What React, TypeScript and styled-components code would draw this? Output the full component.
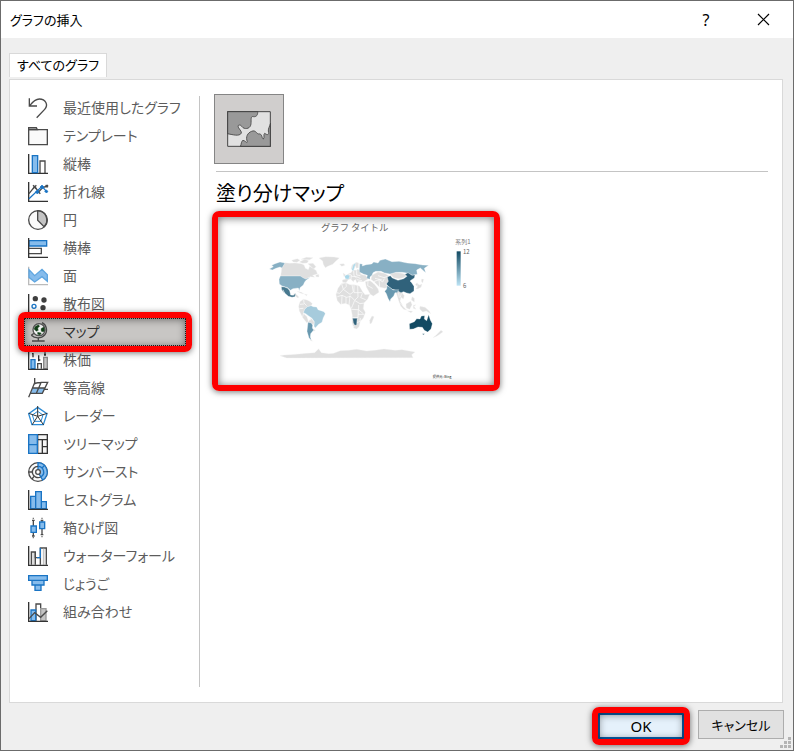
import React, { useState } from 'react';
import styled, { createGlobalStyle, css } from 'styled-components';

const INK = '#4a4a4a';
const BLUE = '#1a74c4';
const SKY = '#86bcec';

const GlobalStyle = createGlobalStyle`
  *, *::before, *::after { box-sizing: border-box; }
  body {
    margin: 0;
    background: #efefef;
    color: #000;
    font-family: "Noto Sans CJK JP", "Noto Sans", sans-serif;
    font-feature-settings: "palt";
    font-size: 14px;
  }
  button { font: inherit; font-feature-settings: inherit; color: inherit; }
`;

const Dialog = styled.div`
  display: flex;
  flex-direction: column;
  min-height: 100vh;
  border: 1px solid #6b6b6b;
  background: #efefef;
`;

const TitleBar = styled.header`
  display: flex;
  align-items: center;
  height: 37px;
  padding: 0 6px 0 9px;
  background: #fff;
`;

const Title = styled.h1`
  flex: 1;
  margin: 0;
  font-size: 13px;
  font-weight: 400;
`;

const CaptionButton = styled.button`
  display: grid;
  place-items: center;
  width: 48px;
  height: 28px;
  margin-left: 9px;
  padding: 0;
  border: 0;
  background: transparent;
  font-family: "Noto Sans", sans-serif;
  font-size: 16px;
`;

const Body = styled.div`
  display: flex;
  flex: 1;
  flex-direction: column;
  align-items: stretch;
  padding: 15px 10px 0 8px;
`;

const Tab = styled.button`
  align-self: flex-start;
  height: 24px;
  margin-bottom: 2px;
  padding: 0 7px 2px;
  border: 1px solid #d9d9d9;
  border-bottom: 0;
  background: #fff;
  font-size: 13px;
  line-height: 20px;
`;

const Panel = styled.section`
  display: flex;
  flex: 1;
  padding: 14px 14px 15px;
  border: 1px solid #d9d9d9;
  background: #fff;
`;

const ChartList = styled.ul`
  width: 162px;
  margin: 0;
  padding: 0;
  list-style: none;
`;

const frame = css<{ $edge?: number }>`
  position: relative;
  &::after {
    content: "";
    position: absolute;
    z-index: 1;
    inset: -6px;
    border: 6px solid #fe0000;
    border-radius: 7px;
    box-shadow: 0 1px 6px rgba(0, 0, 0, 0.55), inset 0 1px 8px rgba(0, 0, 0, 0.55);
    pointer-events: none;
  }
`;

const ChartItem = styled.button<{ $selected: boolean }>`
  display: flex;
  align-items: center;
  gap: 15px;
  width: 100%;
  height: 28px;
  padding: 0 3px;
  border: 1px solid transparent;
  background: transparent;
  color: #5c5c5c;
  line-height: 20px;
  text-align: left;
  white-space: nowrap;
  ${({ $selected }) =>
    $selected &&
    css`
      ${frame}
      border: 1px dotted #222;
      background: #c8c6c4;
      color: #333;
      &::after { inset: -7px; }
    `}
`;

const ItemLabel = styled.span`
  padding-bottom: 2px;
`;

const Icon = styled.svg`
  flex: none;
  width: 20px;
  height: 20px;
  overflow: visible;
  fill: none;
  stroke: ${INK};
  stroke-width: 4;
`;

const Divider = styled.div`
  width: 1px;
  margin: 2px 14px 0 13px;
  background: #c4c4c4;
`;

const Main = styled.div`
  flex: 1;
  min-width: 0;
`;

const TypeTile = styled.button`
  display: grid;
  place-items: center;
  width: 70px;
  height: 70px;
  padding: 0;
  border: 1px solid #858585;
  background: #d0cecd;
`;

const TypeHeading = styled.h2`
  height: 45px;
  margin: 7px 0 0 2px;
  border-top: 1px solid #c4c4c4;
  font-size: 20px;
  font-weight: 400;
  line-height: 42px;
`;

const Preview = styled.figure`
  ${frame}
  width: 276px;
  margin: 1px 0 0 4px;
  background: #fff;
`;

const PreviewChart = styled.svg`
  display: block;
  width: 100%;
  height: auto;
  font-family: "Noto Sans CJK JP", sans-serif;
  font-feature-settings: normal;
`;

const Footer = styled.footer`
  display: flex;
  justify-content: flex-end;
  align-items: flex-start;
  gap: 14px;
  position: relative;
  height: 47px;
  padding: 7px 9px 0;
`;

const DialogButton = styled.button<{ $primary?: boolean }>`
  width: 86px;
  height: 29px;
  padding: 0;
  border: 1px solid #adadad;
  background: #e1e1e1;
  font-size: 13px;
  line-height: 26px;
  ${({ $primary }) =>
    $primary &&
    css`
      ${frame}
      height: 26px;
      margin-top: 3px;
      border: 2px solid #0a62b0;
      background: #e5f1fb;
      font-family: "Noto Sans", sans-serif;
      font-size: 15px;
      line-height: 20px;
      &::after { inset: -8px; }
    `}
`;

const Grip = styled.svg`
  position: absolute;
  right: 2px;
  bottom: 2px;
  width: 11px;
  height: 11px;
  fill: #b4b4b4;
`;

const axis = <path d="M2 0V58H60" stroke="#333" />;

const charts: { name: string; icon: React.ReactNode }[] = [
  { name: '最近使用したグラフ', icon: <path d="M4 1V24H27M5 23C16 9 23 3 34 3C53 3 62 21 50 34L26 59" /> },
  {
    name: 'テンプレート',
    icon: (
      <>
        <path d="M2 11H58V56H2Z" fill="#fafafa" />
        <path d="M2 5H25L28 11H2Z" fill="#aaa" />
      </>
    ),
  },
  {
    name: '縦棒',
    icon: (
      <>
        <path d="M36 58V21H51V58" />
        {axis}
        <path d="M13 56V5H29V56Z" fill={SKY} stroke={BLUE} />
      </>
    ),
  },
  {
    name: '折れ線',
    icon: (
      <>
        {axis}
        <path d="M3 35L20 14L32 30L44 17L58 12" />
        <path d="M15 10l10 10M25 10l-10 10M28 26l9 9M53 9l7 7M60 9l-7 7" />
        <path d="M3 50L42 13L58 31" stroke={BLUE} />
        <path d="M22 30l6-6 6 6-6 6zM36 15l6-6 6 6-6 6zM50 28l5-4 5 4-5 5z" fill={BLUE} stroke={BLUE} strokeWidth="2" />
      </>
    ),
  },
  {
    name: '円',
    icon: (
      <>
        <circle cx="30" cy="30" r="28" fill="#fafafa" stroke="none" />
        <path d="M29 2V31L48 50A28 28 0 0 0 29 2Z" fill="#c4c4c4" />
        <circle cx="30" cy="30" r="28" />
      </>
    ),
  },
  {
    name: '横棒',
    icon: (
      <>
        <path d="M3 31H40V47H3" />
        <path d="M3 8H56V24H3Z" fill={SKY} stroke={BLUE} />
        {axis}
      </>
    ),
  },
  {
    name: '面',
    icon: (
      <>
        <path d="M2 2V56H60" stroke="#bbb" />
        <path d="M3 11L20 29L42 10L58 26V46L42 32L20 48L3 34Z" fill={SKY} stroke="#5fa6e0" />
      </>
    ),
  },
  {
    name: '散布図',
    icon: (
      <>
        {axis}
        <g fill="#3f3f3f" stroke="none">
          <circle cx="22" cy="14" r="8" />
          <circle cx="48" cy="18" r="8" />
          <circle cx="45" cy="41" r="8" />
        </g>
        <circle cx="18" cy="37" r="6" stroke={BLUE} />
      </>
    ),
  },
  {
    name: 'マップ',
    icon: (
      <>
        <path d="M42 2C56 8 60 28 50 39C40 50 20 50 10 40" />
        <circle cx="33" cy="23" r="18" fill="#f2f2f2" stroke="#555" />
        <path d="M21 14L31 8L35 13L29 18L31 25L25 28L18 21ZM39 20L47 15L50 25L46 30L40 28ZM29 31L40 33L36 39L29 37Z" fill="#123f18" stroke="#123f18" strokeWidth="1" />
        <path d="M10 40L18 34M31 48V56M12 57H50" />
      </>
    ),
  },
  {
    name: '株価',
    icon: (
      <>
        <path d="M29 56V41H40V56" />
        <path d="M47 56V22H58V56Z" fill="#c4c4c4" stroke="#888" />
        <path d="M9 56V29H21V56Z" fill={SKY} stroke={BLUE} />
        {axis}
        <path d="M15 9V22M12 11h5M32 16V34M32 30h5M51 7V18M48 14h6" stroke="#333" />
      </>
    ),
  },
  {
    name: '等高線',
    icon: (
      <>
        <path d="M14 30H50L43 46H8Z" fill={SKY} stroke="none" />
        <path d="M20 0V14L2 58M17 20C24 10 32 17 40 13H59L43 46H7M14 30H50M39 14L25 46M48 34H60" />
      </>
    ),
  },
  {
    name: 'レーダー',
    icon: (
      <>
        <path d="M29 4L57 23L46 56H12L2 23Z" stroke="#2b8bd6" />
        <path d="M29 16L45 27L39 46H19L13 27Z" stroke="#2b8bd6" strokeWidth="3" />
        <path d="M29 0V31M2 22L29 31L58 22M12 57L29 31L47 57" stroke="#333" strokeWidth="3" />
      </>
    ),
  },
  {
    name: 'ツリーマップ',
    icon: (
      <>
        <path d="M29 2H58V58H29ZM29 17H58M43 17V58M43 38H58" fill="#f5f5f5" stroke="#333" />
        <path d="M2 2H28V58H2ZM2 32H28" fill={SKY} stroke={BLUE} />
      </>
    ),
  },
  {
    name: 'サンバースト',
    icon: (
      <>
        <circle cx="30" cy="30" r="28" fill="#fafafa" />
        <path d="M30 2A28 28 0 0 1 44 54L30 30Z" fill={SKY} stroke={BLUE} />
        <path d="M30 13A17 17 0 1 0 38 45" />
        <path d="M30 13A17 17 0 0 1 38 45M50 10L42 18" stroke={BLUE} />
        <circle cx="30" cy="30" r="7" fill="#fff" />
        <path d="M2 30H13M12 51L18 43" />
      </>
    ),
  },
  {
    name: 'ヒストグラム',
    icon: (
      <>
        <path d="M8 56V19H23V56ZM23 56V5H40V56ZM40 56V35H55V56Z" fill={SKY} stroke={BLUE} />
        {axis}
      </>
    ),
  },
  {
    name: '箱ひげ図',
    icon: (
      <>
        <path d="M16 6V54M42 6V50M12 7h8M38 7h8M12 54h8M38 50h8" />
        <path d="M9 24H25V43H9ZM35 12H50V32H35Z" fill={SKY} stroke={BLUE} />
        <path d="M14 1h4M40 1h4M14 59h4M40 56h4" stroke="#777" />
      </>
    ),
  },
  {
    name: 'ウォーターフォール',
    icon: (
      <>
        <path d="M37 56V6H55V56" fill="#f5f5f5" />
        <path d="M47 8V56" stroke="#c4c4c4" />
        <path d="M10 56V18H22V56" fill="#ddd" />
        <path d="M22 18V35H37" />
        <path d="M27 35H37V6" stroke={BLUE} />
        {axis}
      </>
    ),
  },
  {
    name: 'じょうご',
    icon: <path d="M2 5H58V19H2ZM12 19H48V33H12ZM21 33H39V49H21Z" fill={SKY} stroke={BLUE} />,
  },
  {
    name: '組み合わせ',
    icon: (
      <>
        <path d="M24 56V6H38V56" />
        <path d="M38 56V20H54V56Z" fill="#c4c4c4" stroke="#999" />
        <path d="M9 56V24H23V56Z" fill={SKY} stroke={BLUE} />
        {axis}
        <path d="M3 50L20 32L38 46L58 26" />
      </>
    ),
  },
];

function RegionMapIcon() {
  return (
    <svg width="44" height="36" viewBox="0 0 132 108" aria-hidden="true">
      <path d="M1 1H131V107H1Z" fill="#e1e1e1" />
      <path
        d="M1 1H92C93 12 88 18 80 17C70 14 73 27 72 38C71 52 57 56 48 50C42 44 41 40 34 43C30 50 44 58 43 66C38 78 14 70 1 68Z"
        fill="#999"
        stroke="#555"
        strokeWidth="3"
      />
      <path
        d="M40 107C44 98 42 91 48 88C57 90 60 99 61 92C55 78 62 65 74 61C86 56 87 67 95 69C106 66 104 84 109 84C114 79 108 71 113 67C123 74 127 71 124 60C124 51 127 49 131 36V107Z"
        fill="#999"
        stroke="#555"
        strokeWidth="3"
      />
      <path d="M2 2H130V106H2Z" fill="none" stroke="#444" strokeWidth="3" />
    </svg>
  );
}

function WorldMap() {
  return (
    <g transform="translate(165 120)" strokeLinejoin="round">
      <g fill="#dfdfdf" stroke="#f4f4f4" strokeWidth="1">
        <path d="M75 53L88 55L105 54L124 56L132 60L136 70L145 74L149 64L158 69L169 77L172 87L158 91L164 97L151 95L137 103L128 101L121 93H62L64 80L65 69Z" />
        <path d="M95 46L112 41L120 46L111 52L100 51ZM118 51L134 43L146 47L141 54L128 55ZM123 43L139 37L159 38L149 44ZM144 56L159 55L168 65L161 72L150 62ZM167 91L176 88L177 96L168 95Z" />
        <path d="M177 39L197 35L222 36L238 39L227 49L218 58L203 64L196 68L190 58L188 48Z" />
        <path d="M239 57L252 56L254 61L245 64Z" />
        <path d="M101 144L111 150L117 157L112 158L103 150ZM111 139L124 142L132 147L123 145ZM133 147L142 149L139 152Z" />
        <path d="M120 170L130 163L141 165L151 170L157 176L153 183L142 186L134 193L132 207L141 215L145 229L141 234L129 219L118 198L116 184Z" />
        <path d="M145 230L153 220L163 232L160 240L153 233L144 232ZM158 251L166 256L161 259ZM151 282L158 289L152 287Z" />
        <path d="M244 116L258 114L270 119L282 119L298 123L307 139L315 149L329 148L323 162L312 174L310 191L316 202L310 219L301 229L297 245L290 252L281 249L276 231L277 211L273 192L269 181L257 175L242 178L232 167L228 149L234 130Z" />
        <path d="M336 213L342 215L335 234L330 237L329 226Z" />
        <path d="M247 105L258 102L256 95L263 87L273 83L279 75L289 76L293 73L302 77L302 88L315 90L326 101L317 106L310 110L296 109L291 114L286 103L280 110L272 102L264 105L258 113L248 112Z" />
        <path d="M249 84L257 90L252 95ZM273 72L276 60L289 52L296 54L295 68L289 70L287 62L281 74Z" />
        <path d="M316 110L330 107L342 116L354 131L357 142L340 153L331 148L319 126Z" />
        <path d="M336 91L354 81L373 85L384 91L392 101L385 111L377 117L383 125L375 130L358 126L344 112L333 103Z" />
        <path d="M389 86L404 82L424 85L436 88L441 92L429 98L416 101L401 98Z" />
        <path d="M405 136L416 139L424 141L433 152L430 162L423 157L420 168L427 180L418 173L411 151Z" />
        <path d="M418 171L431 187L440 195L431 193L422 183ZM438 177L452 169L456 179L449 193L439 189ZM442 197L458 199L453 203ZM460 181L468 179L462 184L468 193L460 190ZM456 155L463 160L463 171L454 165ZM480 184L495 187L508 198L512 206L499 198L488 201L479 192Z" />
        <path d="M473 116L479 120L486 117L483 127L474 131L467 132L472 127ZM485 102L491 103L488 114L484 109ZM471 113L475 119L471 123L466 119ZM543 256L549 260L539 268L531 273L519 278L529 270Z" />
        <path d="M60 332L73 330L91 329L118 327L140 325L164 323L176 311L184 323L207 326L221 325L241 317L267 316L290 313L320 318L344 316L372 312L405 316L426 314L465 321L455 329L459 338L80 339Z" />
      </g>
      <g fill="none" stroke="#fff" strokeWidth="2">
        <path d="M245 117L250 133L239 145L230 143M258 115L259 124L250 133L270 148L280 141L276 119M282 120L282 143L307 143M293 122L294 156L284 166L272 154L260 157L246 151L232 155M246 150L245 177M258 156L258 175M270 152L267 180M284 166L278 181L274 190M285 167L300 176L314 174M307 145L302 158L317 164M274 193L295 194L294 218L277 218M296 180L296 195L310 206M294 208L312 208M292 218L286 235L280 247M301 219L300 229L286 235" />
        <path d="M265 87L274 90L273 103M281 77L282 92L290 99M290 76L290 90L301 92M274 94L289 95L302 101M268 102L266 108M290 104L306 107M324 109L323 122L338 130M341 116L343 109L358 104L368 111L373 101M357 104L359 126M131 164L132 174L140 182M120 178L132 177M118 191L130 190M132 199L128 215M142 218L153 225" />
        <path d="M354 92L372 98L383 94M345 100L367 105M416 143L418 158M424 145L421 157M302 83L313 91M281 107L288 109" />
      </g>
      <g stroke="#fff" strokeWidth="1">
        <path d="M28 72L40 65L35 61L45 56L60 51L75 54L66 69L60 66L48 70L37 75Z" fill="#88b0c4" />
        <path d="M61 93H121L129 98L137 102L151 97L139 105L134 111L130 120L120 128L118 137L115 129L99 131L91 136L83 128L66 123L58 117L57 103Z" fill="#88b0c4" />
        <path d="M64 125L73 126L83 130L89 137L92 150L100 151L107 145L105 155L96 157L85 154L74 144L69 134L73 145L65 134Z" fill="#48798f" />
        <path d="M134 193L142 185L153 182L160 185L170 186L174 194L192 200L196 206L190 218L186 232L176 238L166 249L162 244L163 230L156 220L145 212L137 206L130 203Z" fill="#a6cbdc" />
        <path d="M144 232L154 234L158 241L157 249L161 255L152 266L151 276L154 286L147 279L141 259Z" fill="#6898af" />
        <path d="M258 90L265 89L269 94L266 103L256 101L254 94ZM275 75L280 59L288 53L283 68L280 78Z" fill="#a9d7e9" />
        <path d="M298 73L299 56L307 57L307 63L318 59L335 57L341 51L354 54L360 46L376 42L396 50L417 49L442 54L466 56L488 60L506 61L493 70L497 83L481 69L470 75L472 88L457 91L445 85L427 82L408 82L390 87L374 84L363 79L347 79L339 83L336 91L330 96L330 103L320 100L322 91L310 87L298 81Z" fill="#88b0c4" />
        <path d="M382 96L391 92L397 99L414 106L431 101L441 94L435 88L444 83L456 91L465 90L463 99L455 104L450 108L455 113L462 124L462 138L450 146L440 144L431 140L423 143L409 136L397 133L386 125L379 117L385 109Z" fill="#30627b" />
        <path d="M381 122L388 126L399 135L416 134L412 143L405 143L401 153L392 162L390 170L384 160L379 146L374 139L380 132Z" fill="#6898af" />
        <path d="M278 220H292L291 225L290 240L284 241L280 233Z" fill="#30627b" />
        <path d="M449 253L448 236L463 230L470 221L480 222L484 213L494 212L493 222L500 227L506 209L511 225L517 236L513 252L503 261L493 256L487 247L474 246L460 252ZM487 266H494L490 270Z" fill="#124a63" />
      </g>
    </g>
  );
}

function MapPreview() {
  return (
    <PreviewChart viewBox="39 36 828 504" role="img" aria-label="グラフ タイトル">
      <defs>
        <linearGradient id="scale" x1="0" y1="0" x2="0" y2="1">
          <stop offset="0" stopColor="#124a63" />
          <stop offset="1" stopColor="#bde4f5" />
        </linearGradient>
      </defs>
      <text x="449" y="77" textAnchor="middle" fontSize="28" fill="#666">グラフ タイトル</text>
      <text x="751" y="117" fontSize="18" fill="#777">系列1</text>
      <rect x="755" y="139" width="12" height="103" fill="url(#scale)" />
      <text x="774" y="147" fontSize="18" fill="#666">12</text>
      <text x="774" y="248" fontSize="18" fill="#666">6</text>
      <WorldMap />
      <text x="683" y="519" fontSize="10" fill="#222">提供元: Bing</text>
    </PreviewChart>
  );
}

export default function App() {
  const [selected, setSelected] = useState('マップ');
  return (
    <>
      <GlobalStyle />
      <Dialog role="dialog" aria-label="グラフの挿入">
        <TitleBar>
          <Title>グラフの挿入</Title>
          <CaptionButton aria-label="ヘルプ">?</CaptionButton>
          <CaptionButton aria-label="閉じる">
            <svg width="13" height="13" viewBox="0 0 13 13" aria-hidden="true">
              <path d="M1 1L12 12M12 1L1 12" stroke="#000" strokeWidth="1.2" />
            </svg>
          </CaptionButton>
        </TitleBar>
        <Body>
          <Tab>すべてのグラフ</Tab>
          <Panel>
            <ChartList>
              {charts.map(({ name, icon }) => (
                <li key={name}>
                  <ChartItem
                    $selected={name === selected}
                    aria-pressed={name === selected}
                    onClick={() => setSelected(name)}
                  >
                    <Icon viewBox="0 0 60 60" aria-hidden="true">{icon}</Icon>
                    <ItemLabel>{name}</ItemLabel>
                  </ChartItem>
                </li>
              ))}
            </ChartList>
            <Divider />
            <Main>
              <TypeTile aria-label="塗り分けマップ">
                <RegionMapIcon />
              </TypeTile>
              <TypeHeading>塗り分けマップ</TypeHeading>
              <Preview>
                <MapPreview />
              </Preview>
            </Main>
          </Panel>
        </Body>
        <Footer>
          <DialogButton $primary>OK</DialogButton>
          <DialogButton>キャンセル</DialogButton>
          <Grip viewBox="0 0 11 11" aria-hidden="true">
            <path d="M8 0h3v3h-3zM4 4h3v3h-3zM8 4h3v3h-3zM0 8h3v3h-3zM4 8h3v3h-3zM8 8h3v3h-3z" />
          </Grip>
        </Footer>
      </Dialog>
    </>
  );
}
